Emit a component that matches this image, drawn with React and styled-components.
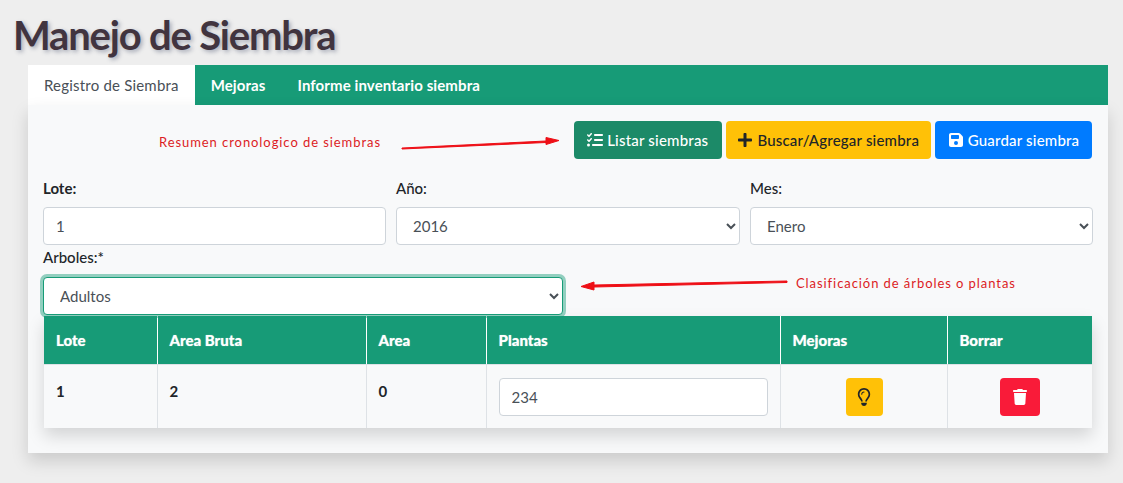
import React from 'react';
import styled, { createGlobalStyle } from 'styled-components';
import { FaPlus } from 'react-icons/fa';
import { FaListCheck, FaFloppyDisk, FaRegLightbulb, FaTrash } from 'react-icons/fa6';

const GlobalStyle = createGlobalStyle`
  html, body {
    margin: 0;
    padding: 0;
    background-color: #eeeeee;
    font-family: "Lato", "Liberation Sans", sans-serif;
  }
`;

const Page = styled.div`
  width: 1123px;
  height: 483px;
  box-sizing: border-box;
  overflow: hidden;
  padding: 13px 15px 0 28px;
`;

const Title = styled.h1`
  margin: 0 0 0 -15px;
  height: 52px;
  font-family: "Lato", sans-serif;
  font-size: 40px;
  line-height: 44px;
  font-weight: 700;
  letter-spacing: -1.2px;
  color: #41343f;
  text-shadow: 2px 2px 4px rgba(60, 70, 100, 0.4);
`;

const Tabs = styled.div`
  display: flex;
  height: 40px;
  background-color: #179b77;
`;

const Tab = styled.div`
  padding: 0 16px;
  display: flex;
  align-items: center;
  font-size: 15px;
  letter-spacing: ${(p) => (p.$active ? '0.2px' : '0.1px')};
  font-weight: ${(p) => (p.$active ? 400 : 700)};
  background-color: ${(p) => (p.$active ? '#ffffff' : 'transparent')};
  color: ${(p) => (p.$active ? '#495057' : '#ffffff')};
`;

const Card = styled.div`
  position: relative;
  height: 348px;
  box-sizing: border-box;
  padding: 16px 16px 0 16px;
  background-color: #f8f9fa;
  box-shadow: 0 8px 16px rgba(0, 0, 0, 0.15);
`;

const Toolbar = styled.div`
  display: flex;
  justify-content: flex-end;
  gap: 4.5px;
  height: 38px;
`;

const Button = styled.button`
  display: flex;
  align-items: center;
  gap: 4px;
  height: 38px;
  width: ${(p) => p.$width}px;
  justify-content: center;
  padding: 0;
  border: none;
  border-radius: 4px;
  font-family: inherit;
  font-size: 15px;
  font-weight: 500;
  letter-spacing: 0.2px;
  background-color: ${(p) => p.$bg};
  color: ${(p) => p.$fg};

  svg {
    font-size: 16px;
    flex: none;
  }
`;

const FormRow = styled.div`
  display: grid;
  grid-template-columns: 343px 344px 343px;
  gap: 10px;
  margin-top: 19px;
  margin-left: -1px;
  margin-right: -1px;
`;

const Field = styled.div`
  display: flex;
  flex-direction: column;
  width: ${(p) => (p.$width ? `${p.$width}px` : 'auto')};
`;

const Label = styled.label`
  height: ${(p) => p.$height || 29}px;
  font-size: 15px;
  line-height: 20px;
  font-weight: ${(p) => (p.$bold ? 700 : 500)};
  color: #212529;
`;

const TextInput = styled.input`
  box-sizing: border-box;
  width: 100%;
  height: 38px;
  padding: 0 12px;
  border: 1px solid #ced4da;
  border-radius: 4px;
  background-color: #ffffff;
  font-family: inherit;
  font-size: 15px;
  color: #495057;
  outline: none;
`;

const Select = styled.select`
  box-sizing: border-box;
  width: 100%;
  height: 38px;
  padding: 0 12px;
  border: 1px solid ${(p) => (p.$focus ? '#179b77' : '#ced4da')};
  border-radius: 4px;
  background-color: #ffffff;
  font-family: inherit;
  font-size: 15px;
  color: #495057;
  outline: none;
  box-shadow: ${(p) => (p.$focus ? '0 0 0 3px rgba(23, 155, 119, 0.45)' : 'none')};
`;

const SecondRow = styled.div`
  margin-top: 2px;
  margin-left: -1px;
  height: 69px;
`;

const Grid = styled.table`
  width: 1048px;
  table-layout: fixed;
  border-collapse: collapse;
  box-shadow: 0 8px 16px rgba(0, 0, 0, 0.15);
`;

const HeadCell = styled.th`
  height: 48px;
  box-sizing: border-box;
  padding: 0 12px;
  text-align: left;
  font-size: 15px;
  font-weight: 900;
  color: #ffffff;
  text-shadow: 0 0 1px rgba(255, 255, 255, 0.6);
  background-color: #179b77;
  border-left: 1px solid #ffffff;
  border-bottom: 1px solid #dee2e6;
  &:first-child { border-left: none; }
`;

const Cell = styled.td`
  height: 64px;
  box-sizing: border-box;
  padding: ${(p) => (p.$control ? '2px 12px 0' : '17px 12px 0')};
  vertical-align: ${(p) => (p.$control ? 'middle' : 'top')};
  text-align: ${(p) => (p.$center ? 'center' : 'left')};
  font-size: 15px;
  font-weight: 700;
  color: #212529;
  background-color: #f8f9fa;
  border-left: 1px solid #dee2e6;
  &:first-child { border-left: none; }
`;

const IconButton = styled.button`
  display: inline-flex;
  align-items: center;
  justify-content: center;
  vertical-align: middle;
  width: ${(p) => p.$width}px;
  height: 38px;
  margin-left: ${(p) => p.$nudge || 0}px;
  padding: 0;
  border: none;
  border-radius: 4px;
  font-size: ${(p) => p.$iconSize || 16}px;
  background-color: ${(p) => p.$bg};
  color: ${(p) => p.$fg};
`;

const Note = styled.span`
  position: absolute;
  left: ${(p) => p.$left}px;
  top: ${(p) => p.$top}px;
  font-size: 13px;
  line-height: 16px;
  letter-spacing: 0.93px;
  color: #dc1c24;
`;

const ArrowOverlay = styled.svg`
  position: absolute;
  left: -28px;
  top: -105px;
  width: 1123px;
  height: 483px;
  pointer-events: none;
`;

const columns = [113, 209, 120, 294, 167, 145];

export default function App() {
  return (
    <Page>
      <GlobalStyle />
      <Title>Manejo de Siembra</Title>
      <Tabs>
        <Tab $active>Registro de Siembra</Tab>
        <Tab>Mejoras</Tab>
        <Tab>Informe inventario siembra</Tab>
      </Tabs>
      <Card>
        <Toolbar>
          <Button $width={147.5} $bg="#1c8a68" $fg="#ffffff">
            <FaListCheck /> Listar siembras
          </Button>
          <Button $width={204.5} $bg="#ffc107" $fg="#212529">
            <FaPlus /> Buscar/Agregar siembra
          </Button>
          <Button $width={157} $bg="#007bff" $fg="#ffffff">
            <FaFloppyDisk /> Guardar siembra
          </Button>
        </Toolbar>
        <FormRow>
          <Field>
            <Label $bold>Lote:</Label>
            <TextInput defaultValue="1" />
          </Field>
          <Field>
            <Label>Año:</Label>
            <Select defaultValue="2016">
              <option>2016</option>
            </Select>
          </Field>
          <Field>
            <Label>Mes:</Label>
            <Select defaultValue="Enero">
              <option>Enero</option>
            </Select>
          </Field>
        </FormRow>
        <SecondRow>
          <Field $width={520}>
            <Label $height={30}>Arboles:*</Label>
            <Select $focus defaultValue="Adultos">
              <option>Adultos</option>
            </Select>
          </Field>
        </SecondRow>
        <Grid>
          <colgroup>
            {columns.map((width, i) => (
              <col key={i} style={{ width }} />
            ))}
          </colgroup>
          <thead>
            <tr>
              <HeadCell>Lote</HeadCell>
              <HeadCell>Area Bruta</HeadCell>
              <HeadCell>Area</HeadCell>
              <HeadCell>Plantas</HeadCell>
              <HeadCell>Mejoras</HeadCell>
              <HeadCell>Borrar</HeadCell>
            </tr>
          </thead>
          <tbody>
            <tr>
              <Cell>1</Cell>
              <Cell>2</Cell>
              <Cell>0</Cell>
              <Cell $control>
                <TextInput defaultValue="234" />
              </Cell>
              <Cell $control $center>
                <IconButton $width={37} $nudge={1} $iconSize={18} $bg="#ffc107" $fg="#212529">
                  <FaRegLightbulb />
                </IconButton>
              </Cell>
              <Cell $control $center>
                <IconButton $width={40} $bg="#f91b39" $fg="#ffffff">
                  <FaTrash />
                </IconButton>
              </Cell>
            </tr>
          </tbody>
        </Grid>
        <Note $left={131} $top={29}>Resumen cronologico de siembras</Note>
        <Note $left={768} $top={170}>Clasificación de árboles o plantas</Note>
        <ArrowOverlay viewBox="0 0 1123 483">
          <path d="M402 148 L546 141 L546 137.500 L559 140.500 L546 144.500 L546 142.500 L402 149 Z" fill="#ee0f16" stroke="#ee0f16" strokeWidth="1" />
          <path d="M787 281 L594 285 L594 282 L581 286.500 L594 290 L594 287 L787 282.500 Z" fill="#ee0f16" stroke="#ee0f16" strokeWidth="1" />
        </ArrowOverlay>
      </Card>
    </Page>
  );
}
